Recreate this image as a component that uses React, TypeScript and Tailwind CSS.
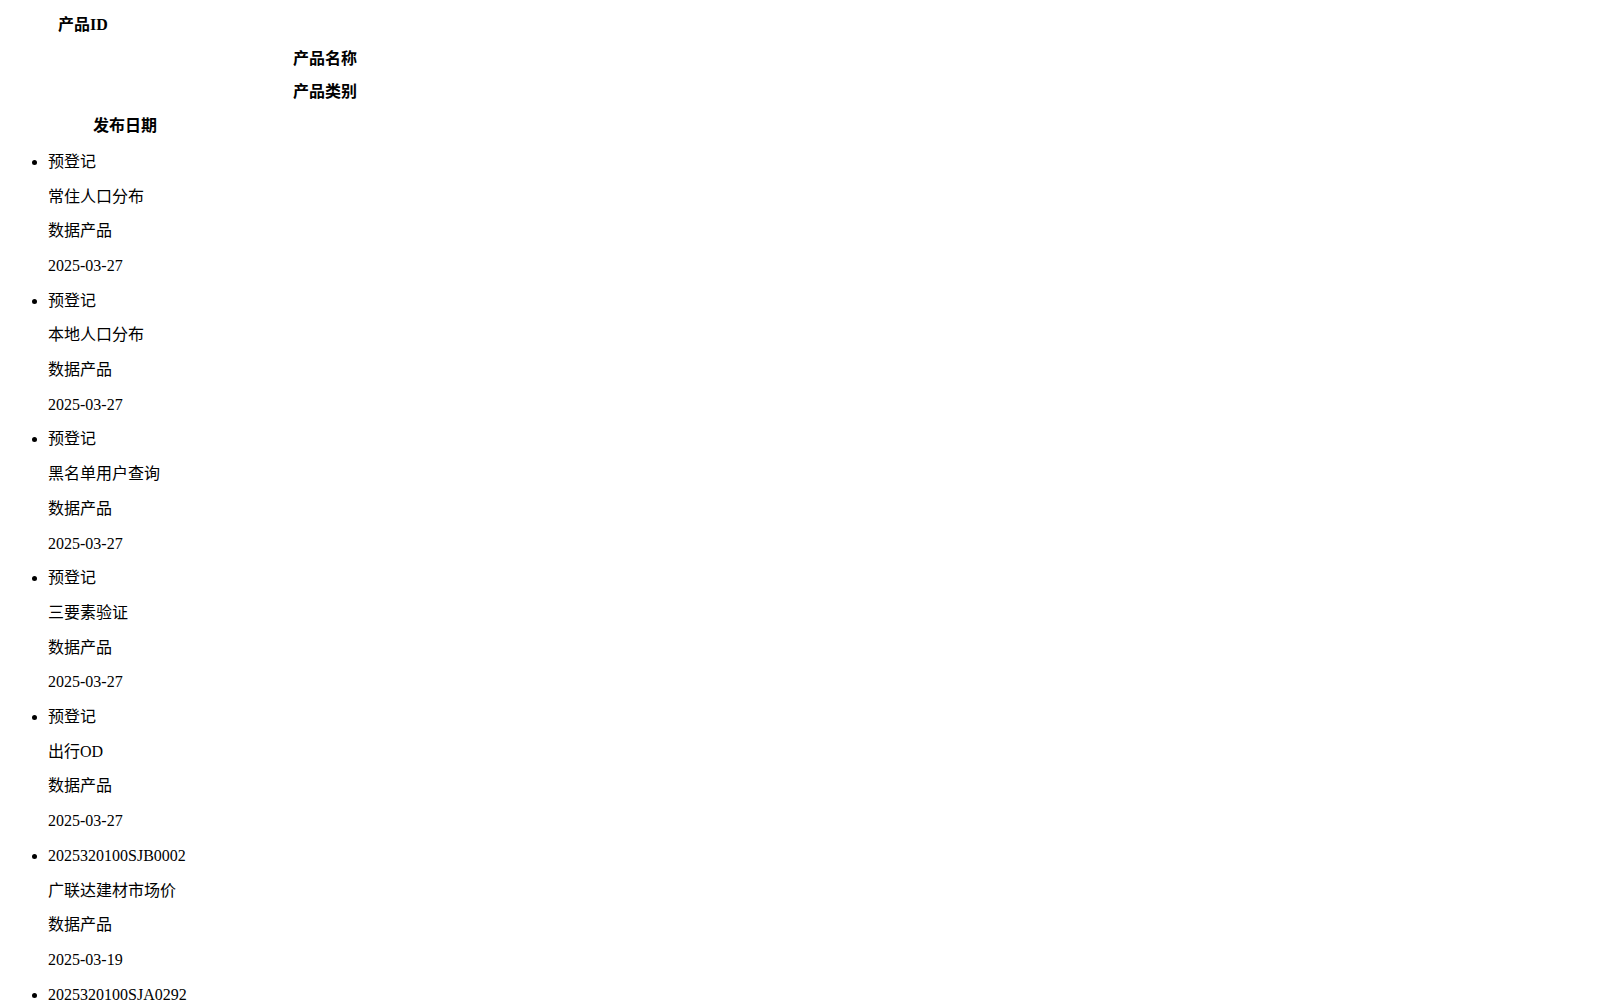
const headers = [
  { label: "产品ID", width: "w-[150px]" },
  { label: "产品名称", width: "w-[634px]" },
  { label: "产品类别", width: "w-[634px]" },
  { label: "发布日期", width: "w-[234px]" },
];

const products = [
  { id: "预登记", name: "常住人口分布", type: "数据产品", date: "2025-03-27" },
  { id: "预登记", name: "本地人口分布", type: "数据产品", date: "2025-03-27" },
  { id: "预登记", name: "黑名单用户查询", type: "数据产品", date: "2025-03-27" },
  { id: "预登记", name: "三要素验证", type: "数据产品", date: "2025-03-27" },
  { id: "预登记", name: "出行OD", type: "数据产品", date: "2025-03-27" },
  { id: "2025320100SJB0002", name: "广联达建材市场价", type: "数据产品", date: "2025-03-19" },
  { id: "2025320100SJA0292", name: "企业信用评价", type: "数据产品", date: "2025-03-18" },
  { id: "2025320100SJA0291", name: "交通流量分析", type: "数据产品", date: "2025-03-18" },
  { id: "2025320100SJA0290", name: "商圈客流画像", type: "数据产品", date: "2025-03-17" },
  { id: "2025320100SJA0289", name: "气象数据服务", type: "数据产品", date: "2025-03-17" },
  { id: "2025320100SJA0288", name: "不动产登记查询", type: "数据产品", date: "2025-03-14" },
  { id: "2025320100SJA0287", name: "公共信用报告", type: "数据产品", date: "2025-03-14" },
];

export default function App() {
  return (
    <div className="min-h-screen bg-white text-black text-[16px] font-['Liberation_Serif','Noto_Sans_CJK_SC',serif] px-2 py-4">
      {/* column headers */}
      <div className="flex flex-col gap-4">
        {headers.map((h) => (
          <div key={h.label} className={`${h.width} text-center font-bold leading-[17.7px]`}>
            {h.label}
          </div>
        ))}
      </div>

      {/* product rows */}
      <ul className="list-disc pl-[40px] mt-[18px] leading-[18.7px]">
        {products.map((p, i) => (
          <li key={i} className={i > 0 ? "mt-4" : ""}>
            <p>{p.id}</p>
            <p className="mt-4">{p.name}</p>
            <p className="mt-4">{p.type}</p>
            <p className="mt-4">{p.date}</p>
          </li>
        ))}
      </ul>
    </div>
  );
}
